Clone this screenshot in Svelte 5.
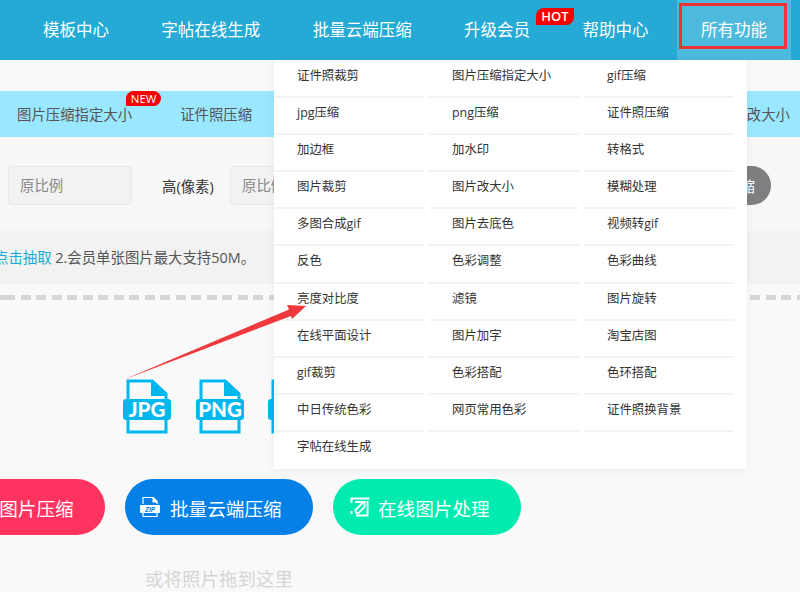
<script>
	const navItems = [
		{ label: '模板中心' },
		{ label: '字帖在线生成' },
		{ label: '批量云端压缩' },
		{ label: '升级会员', hot: true },
		{ label: '帮助中心' }
	];

	const menuItems = [
		'证件照裁剪', '图片压缩指定大小', 'gif压缩',
		'jpg压缩', 'png压缩', '证件照压缩',
		'加边框', '加水印', '转格式',
		'图片裁剪', '图片改大小', '模糊处理',
		'多图合成gif', '图片去底色', '视频转gif',
		'反色', '色彩调整', '色彩曲线',
		'亮度对比度', '滤镜', '图片旋转',
		'在线平面设计', '图片加字', '淘宝店图',
		'gif裁剪', '色彩搭配', '色环搭配',
		'中日传统色彩', '网页常用色彩', '证件照换背景',
		'字帖在线生成'
	];

	const formats = ['JPG', 'PNG', 'GIF'];
</script>

<div class="page">
	<header class="topbar">
		<nav class="nav">
			{#each navItems as item}
				<a class="nav-link">
					{item.label}
					{#if item.hot}<span class="hot">HOT</span>{/if}
				</a>
			{/each}
		</nav>
		<a class="nav-all">所有功能</a>
	</header>

	<div class="tabs">
		<span class="tab">图片压缩指定大小<span class="new">NEW</span></span>
		<span class="tab">证件照压缩</span>
		<span class="tab tab-end">图片改大小</span>
	</div>

	<div class="form-row">
		<div class="field">原比例</div>
		<span class="field-label">高(像素)</span>
		<div class="field">原比例</div>
		<button class="start">开始压缩</button>
	</div>

	<p class="note"><a class="note-link">点击抽取</a> 2.会员单张图片最大支持50M。</p>

	<div class="dashes"></div>

	<div class="formats">
		{#each formats as name}
			<svg class="file" viewBox="0 0 48 55" width="48" height="55">
				<path d="M5 20V2h24L43 15v5M43 41v12H5V41" fill="none" stroke="#00b7ee" stroke-width="3" />
				<path d="M28 1h2l14 13v3H28z" fill="#00b7ee" />
				<rect x="0" y="20" width="48" height="21" rx="3" fill="#00b7ee" />
				<text x="24" y="38" text-anchor="middle">{name}</text>
			</svg>
		{/each}
	</div>

	<div class="actions">
		<button class="action red">本地图片压缩</button>
		<button class="action blue">
			<svg viewBox="0 0 20 22" width="20" height="22">
				<path d="M3 8V1.500h10l4 4V8M17 17v3.500H3V17" fill="none" stroke="#fff" stroke-width="1.200" />
				<path d="M12.500 1h1l4 4v1.500h-5z" fill="#fff" />
				<rect x="0" y="9" width="20" height="8" rx="1" fill="#fff" />
				<text class="zip" x="10" y="15.500" text-anchor="middle">ZIP</text>
			</svg>
			批量云端压缩
		</button>
		<button class="action green">
			<svg viewBox="0 0 20 20" width="20" height="20">
				<path d="M1.500 6V1.500h18M17.500 4v14.500H6M1.500 14v3" fill="none" stroke="#fff" stroke-width="2" />
				<path d="M5 5h9.500v5L9 15.500a2.100 2.100 0 0 1-3 0 2.100 2.100 0 0 1 0-3L13 5.500" fill="none" stroke="#fff" stroke-width="1.800" />
			</svg>
			在线图片处理
		</button>
	</div>

	<p class="drop-hint">或将照片拖到这里</p>

	<div class="menu">
		{#each menuItems as item}
			<a class="menu-item">{item}</a>
		{/each}
	</div>

	<div class="mark"></div>
	<svg class="arrow" viewBox="0 0 190 80" width="190" height="80">
		<polygon points="3,76 169,5.500 167,1 186,2 172,15 171,12" fill="#f0393c" />
	</svg>
</div>

<style>
	:global(body) {
		background: #f9f9f9;
	}

	.page {
		position: relative;
		width: 800px;
		height: 592px;
		overflow: hidden;
		background: #f9f9f9;
		color: #333;
		font-family: "Open Sans", "Noto Sans CJK SC", sans-serif;
	}

	.topbar {
		display: flex;
		justify-content: space-between;
		height: 60px;
		padding-left: 16.800px;
		padding-right: 9px;
		box-sizing: border-box;
		background: #25a9d5;
		color: #fff;
		font-size: 16.500px;
	}

	.nav {
		display: flex;
	}

	.nav-link {
		position: relative;
		padding: 0 26.200px;
		line-height: 60px;
	}

	.hot {
		position: absolute;
		top: 8px;
		right: -17.600px;
		width: 38px;
		height: 17px;
		background: #f60000;
		border-radius: 8px 0 8px 0;
		font-size: 13px;
		font-weight: 600;
		line-height: 17px;
		text-align: center;
	}

	.nav-all {
		width: 114px;
		background: #4db9dd;
		line-height: 60px;
		text-align: center;
	}

	.tabs {
		display: flex;
		gap: 48px;
		height: 46px;
		margin-top: 31px;
		padding: 0 10px 0 17px;
		background: #99e8ff;
		color: #555;
		font-size: 14.400px;
		line-height: 48px;
	}

	.tab {
		position: relative;
	}

	.tab-end {
		margin-left: auto;
	}

	.new {
		position: absolute;
		top: 0;
		right: -29px;
		width: 35px;
		height: 15px;
		background: #f60000;
		border-radius: 8px 8px 8px 0;
		color: #fff;
		font-size: 11.500px;
		line-height: 15px;
		text-align: center;
	}

	.form-row {
		display: flex;
		align-items: center;
		box-sizing: border-box;
		height: 94px;
		padding: 3px 0 0 8px;
		background: #f7f7f7;
		font-size: 14.400px;
	}

	.field {
		box-sizing: border-box;
		width: 124px;
		height: 39px;
		padding-left: 11px;
		background: #f2f2f2;
		border: 1px solid #e8e8e8;
		border-radius: 3px;
		color: #888;
		line-height: 37px;
	}

	.field-label {
		width: 98px;
		padding-left: 30px;
		box-sizing: border-box;
		color: #333;
	}

	.start {
		width: 120px;
		height: 39px;
		margin-left: auto;
		margin-right: 29px;
		border: 0;
		border-radius: 20px;
		background: #7f7f7f;
		color: #fff;
		font: inherit;
		text-align: right;
		padding-right: 16px;
	}

	.note {
		height: 53px;
		margin: 0;
		background: #f2f2f2;
		color: #555;
		font-size: 14.400px;
		line-height: 53px;
		text-indent: -6px;
	}

	.note-link {
		color: #1aa9d6;
	}

	.dashes {
		height: 5px;
		margin-top: 11px;
		background: repeating-linear-gradient(90deg, #d6d6d6 0 10px, transparent 10px 15.530px);
		background-position-x: 5px;
	}

	.formats {
		display: flex;
		gap: 24.500px;
		margin-top: 79px;
		padding-left: 123px;
	}

	.file {
		flex: none;
	}

	.file text {
		fill: #fff;
		font-family: Lato, "Open Sans", sans-serif;
		font-size: 20.500px;
		font-weight: 900;
	}

	.actions {
		display: flex;
		gap: 20px;
		margin-top: 45px;
		margin-left: -83px;
	}

	.action {
		display: flex;
		flex: none;
		align-items: center;
		gap: 10px;
		width: 188px;
		height: 56px;
		padding: 0 0 0 15px;
		border: 0;
		border-radius: 28px;
		color: #fff;
		font: inherit;
		font-size: 18.600px;
		white-space: nowrap;
	}

	.red {
		background: #ff3360;
		padding-left: 45px;
	}

	.blue {
		background: #0480e6;
	}

	.green {
		background: #00ebb0;
		padding-left: 17px;
		gap: 8px;
	}

	.zip {
		fill: #0480e6;
		font-family: "Liberation Sans", sans-serif;
		font-size: 6.500px;
		font-style: italic;
		font-weight: 700;
	}

	.drop-hint {
		margin: 30px 0 0;
		padding-left: 145px;
		color: #d5d5d5;
		font-size: 18.500px;
		line-height: 28px;
	}

	/* overlays: open dropdown and the screenshot's annotations */
	.menu {
		position: absolute;
		top: 60px;
		left: 274px;
		display: grid;
		grid-template-columns: repeat(3, 150px);
		grid-auto-rows: 37.100px;
		column-gap: 5px;
		box-sizing: border-box;
		width: 473px;
		height: 409px;
		padding-top: 1px;
		background: #fff;
		box-shadow: 0 2px 8px rgba(0, 0, 0, 0.06);
		font-size: 12.400px;
	}

	.menu-item {
		box-sizing: border-box;
		padding-left: 23px;
		border-bottom: 2px solid #f3f3f3;
		line-height: 30px;
	}

	.menu-item:last-child {
		border-bottom: 0;
	}

	.mark {
		position: absolute;
		top: 3px;
		left: 679px;
		width: 108px;
		height: 46px;
		box-sizing: border-box;
		border: 3px solid #f03237;
	}

	.arrow {
		position: absolute;
		top: 304px;
		left: 120px;
	}
</style>
